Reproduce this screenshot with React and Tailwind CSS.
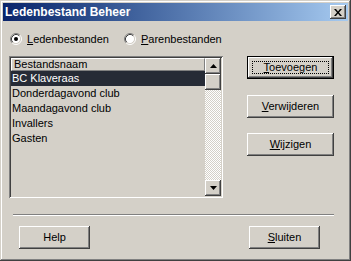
const raised =
  "bg-[#d4d0c8] shadow-[inset_-1px_-1px_#404040,inset_1px_1px_#ffffff,inset_-2px_-2px_#808080,inset_2px_2px_#d4d0c8]";

function Radio({ checked }) {
  return (
    <svg width="12" height="12" viewBox="0 0 12 12" className="shrink-0">
      <circle cx="6" cy="6" r="4.5" fill="#ffffff" />
      <path d="M2.11 9.89A5.5 5.5 0 0 1 9.89 2.11" fill="none" stroke="#808080" />
      <path d="M9.89 2.11A5.5 5.5 0 0 1 2.11 9.89" fill="none" stroke="#ffffff" />
      <path d="M2.82 9.18A4.5 4.5 0 0 1 9.18 2.82" fill="none" stroke="#404040" />
      <path d="M9.18 2.82A4.5 4.5 0 0 1 2.82 9.18" fill="none" stroke="#d4d0c8" />
      {checked && <circle cx="6" cy="6" r="2" fill="#000000" />}
    </svg>
  );
}

function Btn({ children, isDefault, className = "" }) {
  if (isDefault) {
    return (
      <div className={`border border-black ${className}`}>
        <div className={`${raised} h-full flex items-center justify-center p-[4px]`}>
          <div className="w-full h-full border border-dotted border-black flex items-center justify-center">
            {children}
          </div>
        </div>
      </div>
    );
  }
  return (
    <div className={`${raised} flex items-center justify-center ${className}`}>
      {children}
    </div>
  );
}

function Arrow({ up }) {
  return (
    <svg width="7" height="4" viewBox="0 0 7 4">
      <path d={up ? "M0 4H7L3.5 0Z" : "M0 0H7L3.5 4Z"} fill="#000000" />
    </svg>
  );
}

export default function App() {
  const rows = [
    "Donderdagavond club",
    "Maandagavond club",
    "Invallers",
    "Gasten",
  ];

  return (
    <div
      className="w-[351px] h-[261px] p-[3px] flex flex-col bg-[#d4d0c8] text-[11px] text-black shadow-[inset_-1px_-1px_#404040,inset_1px_1px_#d4d0c8,inset_-2px_-2px_#808080,inset_2px_2px_#ffffff]"
      style={{ fontFamily: '"Liberation Sans", Arial, sans-serif' }}
    >
      {/* title bar */}
      <div className="h-[18px] flex items-center justify-between px-[2px] bg-linear-to-r from-[#0a246a] to-[#a6caf0]">
        <span className="text-white font-bold text-[12px] leading-none">
          Ledenbestand Beheer
        </span>
        <div className={`${raised} w-[16px] h-[14px] flex items-center justify-center`}>
          <svg width="8" height="7" viewBox="0 0 8 7">
            <path d="M0 0L2 0L4 2.5L6 0L8 0L5 3.5L8 7L6 7L4 4.5L2 7L0 7L3 3.5Z" fill="#000000" />
          </svg>
        </div>
      </div>

      {/* radio row */}
      <div className="mt-[12px] h-[12px] flex items-center pl-[7px]">
        <div className="w-[114px] flex items-center gap-[5px]">
          <Radio checked />
          <span>
            <u>L</u>edenbestanden
          </span>
        </div>
        <div className="flex items-center gap-[5px]">
          <Radio />
          <span>
            <u>P</u>arenbestanden
          </span>
        </div>
      </div>

      {/* list + buttons */}
      <div className="mt-[11px] flex pl-[6px]">
        <div className="w-[214px] h-[142px] p-[2px] flex shadow-[inset_1px_1px_#808080,inset_-1px_-1px_#ffffff,inset_2px_2px_#404040,inset_-2px_-2px_#d4d0c8]">
          <div className="flex-1 flex flex-col">
            <div className="h-[13px] flex items-center pl-[2px] leading-none border-t border-l border-white border-b border-b-[#808080] border-r border-r-[#808080]">
              Bestandsnaam
            </div>
            <div className="h-[15px] flex items-center pl-[1px] bg-[#262b36] text-white">
              BC Klaveraas
            </div>
            {rows.map((r) => (
              <div key={r} className="h-[15px] flex items-center pl-[1px]">
                {r}
              </div>
            ))}
          </div>
          <div className="w-[16px] flex flex-col">
            <div className={`${raised} h-[16px] flex items-center justify-center`}>
              <Arrow up />
            </div>
            <div className={`${raised} h-[16px]`} />
            <div className="flex-1 bg-[repeating-conic-gradient(#d4d0c8_0_25%,#ffffff_0_50%)] bg-[length:2px_2px]" />
            <div className={`${raised} h-[16px] flex items-center justify-center`}>
              <Arrow />
            </div>
          </div>
        </div>

        <div className="ml-[24px] flex flex-col">
          <Btn isDefault className="w-[87px] h-[23px]">
            <span>
              <u>T</u>oevoegen
            </span>
          </Btn>
          <Btn className="w-[87px] h-[23px] mt-[16px]">
            <span>
              <u>V</u>erwijderen
            </span>
          </Btn>
          <Btn className="w-[87px] h-[23px] mt-[15px]">
            <span>
              <u>W</u>ijzigen
            </span>
          </Btn>
        </div>
      </div>

      {/* separator */}
      <div className="mt-[16px] ml-[10px] w-[321px] border-t border-t-[#808080] border-b border-b-white" />

      {/* bottom buttons */}
      <div className="mt-[10px] flex pl-[16px]">
        <Btn className="w-[71px] h-[23px]">Help</Btn>
        <Btn className="w-[71px] h-[23px] ml-[159px]">
          <span>
            <u>S</u>luiten
          </span>
        </Btn>
      </div>
    </div>
  );
}
